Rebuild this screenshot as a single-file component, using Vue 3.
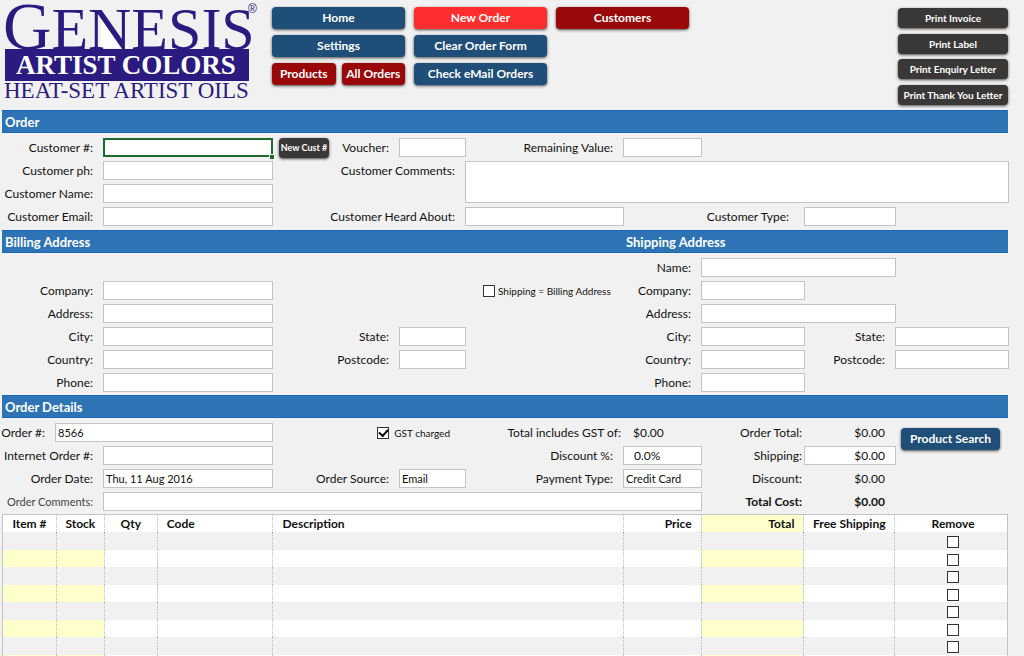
<script setup>
import { reactive, ref } from 'vue'

// Sheet grid lines: 1 | 2 | 3 | ... | 11, shared by every section.
// Each field: label cell [row, from, to], box cell [row, from, to].
const orderFields = [
  { id: 'cust-no', label: 'Customer #:', l: [1, 1, 3], f: [1, 3, 4], cls: 'active' },
  { id: 'cust-ph', label: 'Customer ph:', l: [2, 1, 3], f: [2, 3, 4] },
  { id: 'cust-name', label: 'Customer Name:', l: [3, 1, 3], f: [3, 3, 4] },
  { id: 'cust-email', label: 'Customer Email:', l: [4, 1, 3], f: [4, 3, 4] },
  { id: 'voucher', label: 'Voucher:', l: [1, 4, 5], f: [1, 5, 6] },
  { id: 'remaining', label: 'Remaining Value:', l: [1, 6, 7], f: [1, 7, 8] },
  { id: 'comments', label: 'Customer Comments:', l: [2, 4, 6], f: [2, 6, 11, 2], kind: 'area' },
  { id: 'heard', label: 'Customer Heard About:', l: [4, 4, 6], f: [4, 6, 7] },
  { id: 'cust-type', label: 'Customer Type:', l: [4, 7, 9], f: [4, 9, 10], lcls: 'wide' }
]

const addressFields = [
  { id: 'b-company', label: 'Company:', l: [2, 1, 3], f: [2, 3, 4] },
  { id: 'b-address', label: 'Address:', l: [3, 1, 3], f: [3, 3, 4] },
  { id: 'b-city', label: 'City:', l: [4, 1, 3], f: [4, 3, 4] },
  { id: 'b-country', label: 'Country:', l: [5, 1, 3], f: [5, 3, 4] },
  { id: 'b-phone', label: 'Phone:', l: [6, 1, 3], f: [6, 3, 4] },
  { id: 'b-state', label: 'State:', l: [4, 4, 5], f: [4, 5, 6] },
  { id: 'b-postcode', label: 'Postcode:', l: [5, 4, 5], f: [5, 5, 6] },
  { id: 's-name', label: 'Name:', l: [1, 7, 8], f: [1, 8, 10] },
  { id: 's-company', label: 'Company:', l: [2, 7, 8], f: [2, 8, 9] },
  { id: 's-address', label: 'Address:', l: [3, 7, 8], f: [3, 8, 10] },
  { id: 's-city', label: 'City:', l: [4, 7, 8], f: [4, 8, 9] },
  { id: 's-country', label: 'Country:', l: [5, 7, 8], f: [5, 8, 9] },
  { id: 's-phone', label: 'Phone:', l: [6, 7, 8], f: [6, 8, 9] },
  { id: 's-state', label: 'State:', l: [4, 9, 10], f: [4, 10, 11] },
  { id: 's-postcode', label: 'Postcode:', l: [5, 9, 10], f: [5, 10, 11] }
]

const detailFields = [
  { id: 'order-no', label: 'Order #:', l: [1, 1, 2], f: [1, 2, 4] },
  { id: 'internet-no', label: 'Internet Order #:', l: [2, 1, 3], f: [2, 3, 4] },
  { id: 'order-date', label: 'Order Date:', l: [3, 1, 3], f: [3, 3, 4] },
  { id: 'order-comments', label: 'Order Comments:', l: [4, 1, 3], f: [4, 3, 8], lcls: 'light' },
  { id: 'source', label: 'Order Source:', l: [3, 4, 5], f: [3, 5, 6], kind: 'select', options: ['Email', 'Phone', 'Web'] },
  { id: 'gst', label: 'Total includes GST of:', l: [1, 6, 7], f: [1, 7, 8], kind: 'output', lcls: 'tight', cls: 'inset' },
  { id: 'discount-pc', label: 'Discount %:', l: [2, 6, 7], f: [2, 7, 8], cls: 'inset' },
  { id: 'payment', label: 'Payment Type:', l: [3, 6, 7], f: [3, 7, 8], kind: 'select', options: ['Credit Card', 'Cheque'] },
  { id: 'total', label: 'Order Total:', l: [1, 8, 9], f: [1, 9, 10], kind: 'output', lcls: 'tight', cls: 'money' },
  { id: 'shipping', label: 'Shipping:', l: [2, 8, 9], f: [2, 9, 10], lcls: 'tight', cls: 'money' },
  { id: 'discount', label: 'Discount:', l: [3, 8, 9], f: [3, 9, 10], kind: 'output', lcls: 'tight', cls: 'money' },
  { id: 'cost', label: 'Total Cost:', l: [4, 8, 9], f: [4, 9, 10], kind: 'output', lcls: 'tight strong', cls: 'money strong' }
]

const sections = [
  { key: 'order', titles: ['Order'], fields: orderFields },
  { key: 'address', titles: ['Billing Address', 'Shipping Address'], fields: addressFields },
  { key: 'details', titles: ['Order Details'], fields: detailFields }
]

const values = reactive({
  'order-no': '8566',
  'order-date': 'Thu, 11 Aug 2016',
  source: 'Email',
  gst: '$0.00',
  'discount-pc': '0.0%',
  payment: 'Credit Card',
  total: '$0.00',
  shipping: '$0.00',
  discount: '$0.00',
  cost: '$0.00'
})
const sameAddress = ref(false)
const gstCharged = ref(true)

const area = ([row, from, to, span = 1]) => ({ gridArea: `${row} / ${from} / ${row + span} / ${to}` })

const columns = [
  { name: 'Item #', width: 53, cls: 'center tint' },
  { name: 'Stock', width: 48, cls: 'center tint' },
  { name: 'Qty', width: 53, cls: 'center' },
  { name: 'Code', width: 116, cls: 'left' },
  { name: 'Description', width: 351, cls: 'left' },
  { name: 'Price', width: 78, cls: 'right' },
  { name: 'Total', width: 103, cls: 'right tint tint-head' },
  { name: 'Free Shipping', width: 91, cls: 'center' },
  { name: 'Remove', width: 113, cls: 'center remove' }
]
const sheetWidth = columns.reduce((sum, c) => sum + c.width, 0)
const lines = reactive(Array.from({ length: 8 }, () => ({ remove: false })))
</script>

<template>
  <main class="page">
    <header class="top">
      <svg class="logo" width="262" height="104" viewBox="0 0 262 104" role="img" aria-label="Genesis Artist Colors">
        <polygon points="101,17 101,48 129,48" fill="#fff" />
        <text x="3" y="49" class="name"><tspan class="cap">G</tspan>ENESIS</text>
        <text x="248" y="13" class="reg">®</text>
        <rect x="5" y="49" width="244" height="32" fill="#2b1a80" />
        <text x="16" y="74" class="sub">ARTIST COLORS</text>
        <text x="4" y="98" class="tag">HEAT-SET ARTIST OILS</text>
      </svg>
      <nav class="menu">
        <div class="stack">
          <button type="button" class="btn">Home</button>
          <button type="button" class="btn">Settings</button>
          <div class="pair">
            <button type="button" class="btn maroon">Products</button>
            <button type="button" class="btn maroon">All Orders</button>
          </div>
        </div>
        <div class="stack">
          <button type="button" class="btn red">New Order</button>
          <button type="button" class="btn">Clear Order Form</button>
          <button type="button" class="btn">Check eMail Orders</button>
        </div>
        <div class="stack">
          <button type="button" class="btn maroon">Customers</button>
        </div>
      </nav>
      <div class="prints">
        <button type="button" class="btn dark">Print Invoice</button>
        <button type="button" class="btn dark">Print Label</button>
        <button type="button" class="btn dark">Print Enquiry Letter</button>
        <button type="button" class="btn dark">Print Thank You Letter</button>
      </div>
    </header>

    <section v-for="s in sections" :key="s.key" :class="s.key">
      <div class="band sheet">
        <h2 v-for="t in s.titles" :key="t">{{ t }}</h2>
      </div>
      <div class="form sheet">
        <template v-for="f in s.fields" :key="f.id">
          <label :for="f.id" class="label" :class="f.lcls" :style="area(f.l)">{{ f.label }}</label>
          <textarea v-if="f.kind === 'area'" :id="f.id" v-model="values[f.id]" class="box" :style="area(f.f)"></textarea>
          <select v-else-if="f.kind === 'select'" :id="f.id" v-model="values[f.id]" class="box" :style="area(f.f)">
            <option v-for="o in f.options" :key="o">{{ o }}</option>
          </select>
          <output v-else-if="f.kind === 'output'" :id="f.id" class="value" :class="f.cls" :style="area(f.f)">{{ values[f.id] }}</output>
          <input v-else :id="f.id" v-model="values[f.id]" type="text" class="box" :class="f.cls" :style="area(f.f)">
        </template>
        <template v-if="s.key === 'order'">
          <button type="button" class="btn dark new-cust">New Cust #</button>
          <span class="handle"></span>
        </template>
        <label v-if="s.key === 'address'" class="check same">
          <input v-model="sameAddress" type="checkbox" class="tick">Shipping = Billing Address
        </label>
        <template v-if="s.key === 'details'">
          <label class="check gst"><input v-model="gstCharged" type="checkbox" class="tick">GST charged</label>
          <button type="button" class="btn search">Product Search</button>
        </template>
      </div>
    </section>

    <div class="items">
      <table>
        <colgroup>
          <col v-for="c in columns" :key="c.name" :style="{ width: (c.width / sheetWidth) * 100 + '%' }">
        </colgroup>
        <thead>
          <tr><th v-for="c in columns" :key="c.name" scope="col" :class="c.cls">{{ c.name }}</th></tr>
        </thead>
        <tbody>
          <tr v-for="(line, i) in lines" :key="i">
            <td v-for="c in columns" :key="c.name" :class="c.cls">
              <input v-if="c.name === 'Remove'" v-model="line.remove" type="checkbox" class="tick" :aria-label="'Remove line ' + (i + 1)">
            </td>
          </tr>
        </tbody>
      </table>
    </div>
  </main>
</template>

<style>
body {
  background: #f1f1f1;
}
</style>

<style scoped>
* {
  box-sizing: border-box;
}

.page {
  display: flex;
  flex-direction: column;
  height: 100vh;
  padding: 0 16px 0 2px;
  background: #f1f1f1;
  color: #111;
  font: 12px/18px Lato, "Liberation Sans", sans-serif;
}

button,
input,
select,
textarea {
  margin: 0;
  font-family: inherit;
}

.top {
  display: flex;
  flex: none;
  height: 110px;
}

.logo {
  flex: none;
  margin-left: -2px;
  font-family: "Liberation Serif", serif;
}

.name {
  font-size: 60px;
  fill: #2b1a80;
}

.cap {
  font-size: 67px;
}

.reg {
  font: 12px "Liberation Sans", sans-serif;
  fill: #2b1a80;
}

.sub {
  font-size: 27px;
  font-weight: 700;
  fill: #fff;
}

.tag {
  font-size: 23px;
  fill: #2b1a80;
}

.menu {
  display: flex;
  gap: 9px;
  padding: 7px 0 0 10px;
}

.stack {
  display: flex;
  flex-direction: column;
  gap: 6px;
  width: 133px;
}

.pair {
  display: flex;
  gap: 6px;
}

.pair .btn {
  flex: 1;
}

.prints {
  display: flex;
  flex-direction: column;
  justify-content: space-between;
  width: 110px;
  margin-left: auto;
  padding: 8px 0 5px;
}

.btn {
  height: 22px;
  padding: 0;
  border: 0;
  border-radius: 4px;
  background: #1f4e79;
  box-shadow: 0 1px 3px rgba(0, 0, 0, 0.7);
  color: #fff;
  font-size: 12px;
  font-weight: 700;
  line-height: 20px;
  white-space: nowrap;
}

.maroon {
  background: #990909;
}

.red {
  background: #ff2d2d;
}

.dark {
  height: 20px;
  background: #3a3836;
  font-size: 10px;
  line-height: 18px;
}

.sheet {
  display: grid;
  grid-template-columns:
    minmax(0, 53fr) minmax(0, 48fr) minmax(0, 169fr) minmax(0, 127fr) minmax(0, 66fr)
    minmax(0, 158fr) minmax(0, 78fr) minmax(0, 103fr) minmax(0, 91fr) minmax(0, 113fr);
}

.band {
  height: 23px;
  border: 1px solid #1568b3;
  border-width: 1px 0;
  background: #2e74b5;
}

h2 {
  grid-column: 1 / 5;
  margin: 0;
  padding-left: 3px;
  color: #fff;
  font-size: 13px;
  line-height: 22px;
  white-space: nowrap;
}

h2 + h2 {
  grid-column: 7 / 11;
}

.form {
  grid-auto-rows: 19px;
  row-gap: 4px;
  padding: 5px 0 3px;
}

.order .form {
  padding-bottom: 4px;
}

.address .form {
  grid-template-rows: repeat(6, 19px);
}

.label {
  justify-self: end;
  padding-right: 10px;
  line-height: 19px;
  white-space: nowrap;
}

.wide {
  padding-right: 15px;
}

.tight {
  padding-right: 2px;
}

.light {
  font-size: 11px;
  color: #444;
}

.strong {
  font-weight: 700;
}

.box {
  width: calc(100% + 1px);
  min-width: 0;
  height: 100%;
  padding: 0 2px;
  border: 1px solid #c4c4c4;
  border-radius: 0;
  outline: 0;
  background: #fff;
  color: #111;
  font-size: 11px;
  line-height: 17px;
  appearance: none;
  resize: none;
}

.active {
  border: 2px solid #1d6b2c;
}

.handle {
  grid-area: 1 / 3 / 2 / 4;
  place-self: end;
  position: relative;
  right: -2px;
  bottom: -2px;
  width: 5px;
  height: 5px;
  border: 1px solid #f1f1f1;
  border-width: 1px 0 0 1px;
  background: #1d6b2c;
}

.value {
  line-height: 19px;
}

.inset {
  padding-left: 10px;
  font-size: 12px;
}

.money {
  padding-right: 10px;
  font-size: 12px;
  text-align: right;
}

.new-cust {
  grid-area: 1 / 4 / 2 / 5;
  width: 50px;
  margin-left: 7px;
  font-size: 9px;
}

.check {
  display: flex;
  align-items: center;
  font-size: 10px;
  line-height: 18px;
  white-space: nowrap;
}

.same {
  grid-area: 2 / 6 / 3 / 7;
  gap: 3px;
  padding-left: 18px;
}

.gst {
  grid-area: 1 / 4 / 2 / 6;
  gap: 5px;
  justify-self: end;
  padding-right: 15px;
}

.tick {
  display: grid;
  place-items: center;
  width: 12px;
  height: 12px;
  border: 1px solid #333;
  background: #fff;
  appearance: none;
}

.tick:checked::before {
  content: "";
  width: 7px;
  height: 4px;
  margin-bottom: 2px;
  border: 2px solid #000;
  border-width: 0 0 2px 2px;
  transform: rotate(-48deg);
}

.search {
  grid-area: 1 / 10 / 3 / 11;
  width: 99px;
  margin: 5px 0 0 6px;
}

.items {
  flex: 1;
  min-height: 0;
  overflow: auto;
  scrollbar-width: none;
}

table {
  width: 100%;
  border: 1px solid #c4c4c4;
  border-width: 1px 1px 0;
  border-spacing: 0;
  table-layout: fixed;
}

th,
td {
  padding: 0;
  border-left: 1px dotted #bdbdbd;
  white-space: nowrap;
}

th:first-child,
td:first-child {
  border-left: 0;
}

th {
  height: 17px;
  background: #fff;
  font-size: 12px;
  line-height: 17px;
}

td {
  height: 18px;
  padding-top: 2px;
}

tr:nth-child(even) td {
  height: 17px;
  background: #fff;
}

tr:nth-child(even) td.tint,
th.tint-head {
  background: #ffc;
}

.left {
  padding-left: 9px;
  text-align: left;
}

.right {
  padding-right: 9px;
  text-align: right;
}

.center {
  text-align: center;
}

.remove {
  padding-left: 4px;
}

td .tick {
  margin: 0 auto;
}
</style>
